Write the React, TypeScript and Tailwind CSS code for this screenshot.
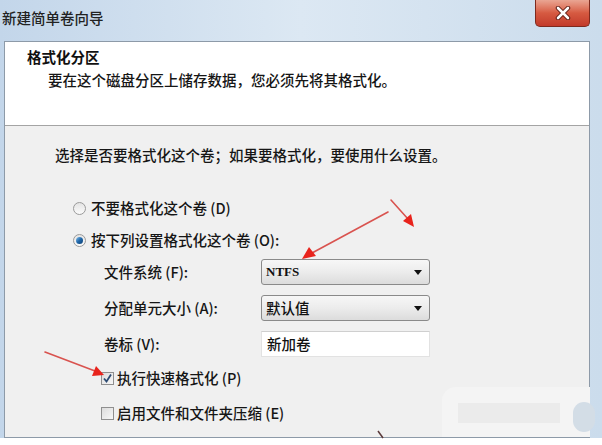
const font = "font-['Noto_Sans_CJK_SC','Noto_Sans',sans-serif]";

const Radio = ({ checked, label }: { checked?: boolean; label: string }) => (
  <div className="flex items-center h-[20px] gap-[5px]">
    <span className="w-[13px] h-[13px] rounded-full border border-[#9a9a9a] bg-gradient-to-b from-[#e4e4e4] to-[#fbfbfb] flex items-center justify-center">
      {checked && (
        <span className="w-[7px] h-[7px] rounded-full bg-gradient-to-br from-[#7fc0ee] via-[#1f66a8] to-[#0d3f73]" />
      )}
    </span>
    <span>{label}</span>
  </div>
);

const Check = ({ checked, label }: { checked?: boolean; label: string }) => (
  <div className="flex items-center h-[20px] gap-[3px]">
    <span className="w-[13px] h-[13px] border border-[#8f8f8f] bg-gradient-to-br from-[#dcdcdc] to-[#f7f7f7] flex items-center justify-center">
      {checked && (
        <svg width="11" height="11" viewBox="0 0 11 11">
          <path d="M2 5.5 L4.5 8.5 L9 1.5" fill="none" stroke="#2c4b72" strokeWidth="1.8" />
        </svg>
      )}
    </span>
    <span>{label}</span>
  </div>
);

const Select = ({ value, mono }: { value: string; mono?: boolean }) => (
  <div className="w-[169px] h-[26px] rounded-[3px] border border-[#8a8a8a] bg-gradient-to-b from-[#f7f7f7] via-[#ececec] to-[#dcdcdc] flex items-center pl-[4px] pr-[7px]">
    <span
      className={
        mono
          ? "font-['Liberation_Serif',serif] font-bold text-[13px] text-[#111]"
          : "text-[14.5px] text-[#111]"
      }
    >
      {value}
    </span>
    <svg className="ml-auto" width="8" height="5" viewBox="0 0 8 5">
      <path d="M0 0 H8 L4 5 Z" fill="#111" />
    </svg>
  </div>
);

const Row = ({ label, children }: { label: string; children: React.ReactNode }) => (
  <div className="flex items-center h-[26px]">
    <span className="w-[157px]">{label}</span>
    {children}
  </div>
);

export default function App() {
  return (
    <div className={`relative w-[602px] h-[445px] overflow-hidden bg-white text-[14.5px] leading-[20px] font-medium text-[#161616] ${font}`}>
      <div className="h-[438px] flex flex-col bg-gradient-to-r from-[#c3d6ea] via-[#dce8f3] to-[#cbdcec]">
        {/* title bar */}
        <div className="h-[41px] flex items-start">
          <span className="pl-[2px] pt-[8px] text-[#222]">新建简单卷向导</span>
          <div className="ml-auto mr-[12px] w-[55px] h-[27px] rounded-b-[5px] border border-t-0 border-[#7d2a1e] bg-gradient-to-b from-[#e9a593] via-[#d65a41] to-[#c23a2a] flex items-center justify-center">
            <svg width="16" height="14" viewBox="0 0 16 14">
              <path d="M3 2 L13 12 M13 2 L3 12" stroke="#5a1a12" strokeWidth="4.5" strokeLinecap="round" />
              <path d="M3 2 L13 12 M13 2 L3 12" stroke="#ffffff" strokeWidth="2.6" strokeLinecap="round" />
            </svg>
          </div>
        </div>

        {/* wizard panel */}
        <div className="ml-[4px] w-[586px] flex-1 border border-[#8d9aa8] flex flex-col">
          <div className="h-[84px] bg-white border-b border-[#a4a4a4] pt-[5px]">
            <div className="pl-[22px] font-bold text-[#111]">格式化分区</div>
            <div className="pl-[43px] mt-[3px]">要在这个磁盘分区上储存数据，您必须先将其格式化。</div>
          </div>

          <div className="relative flex-1 bg-[#f0f0f0]">
            <div className="pl-[50px] pt-[19px]">选择是否要格式化这个卷；如果要格式化，要使用什么设置。</div>

            <div className="pl-[68px] mt-[33px] flex flex-col gap-[12px]">
              <Radio label="不要格式化这个卷 (D)" />
              <Radio checked label="按下列设置格式化这个卷 (O):" />
            </div>

            <div className="pl-[99px] mt-[9px] flex flex-col gap-[10px]">
              <Row label="文件系统 (F):">
                <Select value="NTFS" mono />
              </Row>
              <Row label="分配单元大小 (A):">
                <Select value="默认值" />
              </Row>
              <Row label="卷标 (V):">
                <div className="w-[169px] h-[26px] bg-white border border-[#e2e2e2] border-t-[#cfcfcf] flex items-center pl-[5px] text-[#111]">
                  新加卷
                </div>
              </Row>
            </div>

            <div className="pl-[96px] mt-[11px] flex flex-col gap-[15px]">
              <Check checked label="执行快速格式化 (P)" />
              <Check label="启用文件和文件夹压缩 (E)" />
            </div>

            {/* blurred button remnants, bottom right */}
            <div className="absolute left-[437px] top-[261px] w-[148px] h-[50px] rounded-tl-[14px] bg-[#f4f4f4]">
              <div className="ml-[16px] mt-[16px] w-[102px] h-[20px] bg-[#ebebeb]" />
            </div>
            <div className="absolute right-[-6px] top-[276px] w-[22px] h-[30px] rounded-full bg-[#d3dde6]" />
          </div>
        </div>
      </div>

      {/* annotation arrows */}
      <svg className="absolute inset-0 pointer-events-none" width="602" height="445" viewBox="0 0 602 445">
        <g stroke="#d9534f" strokeWidth="1.6" fill="none" strokeLinecap="round">
          <path d="M388 212 L312 253" />
          <path d="M391 200 L408 219" />
          <path d="M45 352 L95 371" />
        </g>
        <g fill="#e8231c">
          <path d="M302 259 L309 247 L316 256 Z" />
          <path d="M414 227 L403 221 L411 214 Z" />
          <path d="M104 375 L92 376 L96 366 Z" />
        </g>
        <path d="M378 431 L383 438" stroke="#5a3a3a" strokeWidth="1.5" />
      </svg>
    </div>
  );
}
